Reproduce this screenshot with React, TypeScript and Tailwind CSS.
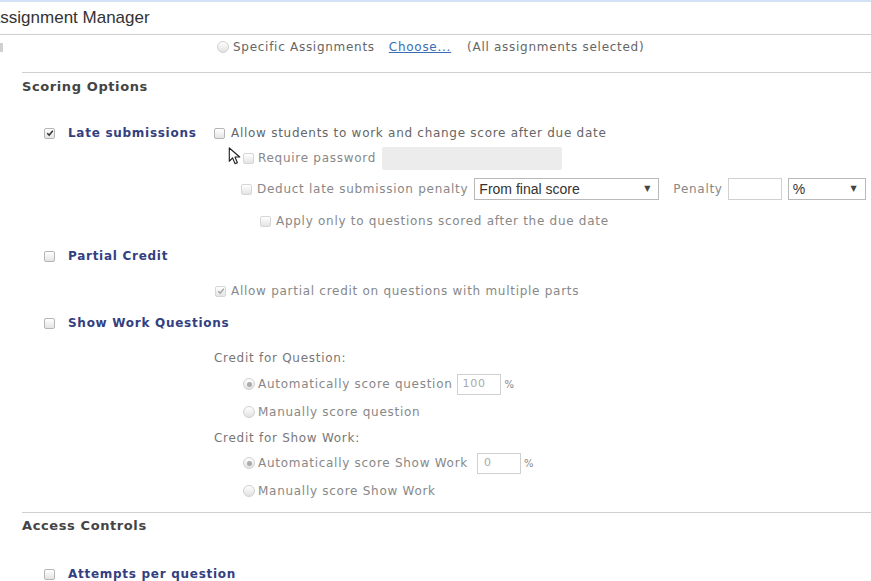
const body = "font-['DejaVu_Sans',Verdana,sans-serif] text-[12px] tracking-[0.72px] text-[#666]";

function Box({ checked = false, dim = false }: { checked?: boolean; dim?: boolean }) {
  return (
    <span
      className={
        "relative inline-flex items-center justify-center w-[11px] h-[11px] rounded-[2px] border shrink-0 bg-gradient-to-b from-white to-[#e4e4e4] " +
        (dim ? "border-[#d6d6d6]" : "border-[#b5b5b5]")
      }
    >
      {checked && (
        <svg viewBox="0 0 10 10" className="w-[8px] h-[8px]">
          <path d="M1.5 5.2 L4 7.6 L8.6 2.2" fill="none" stroke={dim ? "#aaa" : "#333"} strokeWidth="1.8" />
        </svg>
      )}
    </span>
  );
}

function Radio({ on = false }: { on?: boolean }) {
  return (
    <span className="inline-flex items-center justify-center w-[12px] h-[12px] rounded-full border border-[#d0d0d0] bg-gradient-to-b from-white to-[#e2e2e2] shrink-0">
      {on && <span className="w-[5px] h-[5px] rounded-full bg-[#aaa]" />}
    </span>
  );
}

function Label({ children }: { children: React.ReactNode }) {
  return <span className="font-bold text-[#33407f]">{children}</span>;
}

function Select({ text, w }: { text: string; w: string }) {
  return (
    <span className={"flex items-center justify-between h-[22px] border border-[#b9b9b9] pl-[4px] pr-[8px] bg-white tracking-normal " + w}>
      <span className="font-['Liberation_Sans',Arial,sans-serif] text-[14px] text-[#333]">{text}</span>
      <span className="text-[8px] text-[#444]">▼</span>
    </span>
  );
}

export default function App() {
  return (
    <div className={"relative w-[871px] h-[581px] overflow-hidden bg-white " + body}>
      {/* header */}
      <div className="h-[35px] border-t-2 border-t-[#d3e2f6] border-b border-b-[#cfcfcf] flex items-center tracking-normal">
        <span className="ml-[-11px] font-['Liberation_Sans',Arial,sans-serif] text-[17px] text-[#333]">
          Assignment Manager
        </span>
      </div>

      <div className="mt-[1px] flex items-center h-[22px]">
        <span className="w-[3px] h-[9px] bg-[#d0d0d0]" />
        <span className="ml-[214px] flex items-center gap-[4px]">
          <Radio />
          <span>Specific Assignments</span>
        </span>
        <span className="ml-[14px] text-[#3b6db3] underline">Choose...</span>
        <span className="ml-[16px]">(All assignments selected)</span>
      </div>

      {/* scoring options */}
      <div className="mt-[14px] ml-[22px] border-t border-[#d0d0d0] pt-[3px]">
        <div className="h-[22px] flex items-center font-bold text-[#444] text-[13px] tracking-[0.6px]">Scoring Options</div>
      </div>

      <div className="mt-[24px] h-[22px] flex items-center">
        <div className="w-[214px] pl-[44px] flex items-center gap-[13px]">
          <Box checked />
          <Label>Late submissions</Label>
        </div>
        <div className="flex items-center gap-[6px]">
          <Box />
          <span>Allow students to work and change score after due date</span>
        </div>
      </div>

      <div className="mt-[2px] h-[24px] flex items-center pl-[243px] gap-[4px] text-[#888]">
        <Box dim />
        <span>Require password</span>
        <span className="ml-[2px] w-[180px] h-[23px] bg-[#ececec] rounded-[2px]" />
      </div>

      <div className="mt-[8px] h-[22px] flex items-center pl-[241px] text-[#888]">
        <Box dim />
        <span className="ml-[5px]">Deduct late submission penalty</span>
        <Select text="From final score" w="ml-[6px] w-[185px]" />
        <span className="ml-[14px]">Penalty</span>
        <span className="ml-[5px] w-[54px] h-[22px] border border-[#d0d0d0] bg-white" />
        <Select text="%" w="ml-[6px] w-[78px]" />
      </div>

      <div className="mt-[10px] h-[22px] flex items-center pl-[260px] gap-[5px] text-[#888]">
        <Box dim />
        <span>Apply only to questions scored after the due date</span>
      </div>

      <div className="mt-[13px] h-[22px] flex items-center pl-[44px] gap-[13px]">
        <Box />
        <Label>Partial Credit</Label>
      </div>

      <div className="mt-[13px] h-[22px] flex items-center pl-[215px] gap-[5px] text-[#888]">
        <Box checked dim />
        <span>Allow partial credit on questions with multiple parts</span>
      </div>

      <div className="mt-[10px] h-[22px] flex items-center pl-[44px] gap-[13px]">
        <Box />
        <Label>Show Work Questions</Label>
      </div>

      <div className="mt-[13px] h-[22px] flex items-center pl-[214px] text-[#777]">Credit for Question:</div>

      <div className="mt-[4px] h-[22px] flex items-center pl-[243px] text-[#888]">
        <Radio on />
        <span className="ml-[3px]">Automatically score question</span>
        <span className="ml-[4px] w-[44px] h-[21px] border border-[#d0d0d0] pl-[5px] flex items-center text-[11px] text-[#aaa]">100</span>
        <span className="ml-[4px] text-[10px]">%</span>
      </div>

      <div className="mt-[6px] h-[22px] flex items-center pl-[243px] text-[#888]">
        <Radio />
        <span className="ml-[3px]">Manually score question</span>
      </div>

      <div className="mt-[4px] h-[22px] flex items-center pl-[214px] text-[#777]">Credit for Show Work:</div>

      <div className="mt-[3px] h-[22px] flex items-center pl-[243px] text-[#888]">
        <Radio on />
        <span className="ml-[3px]">Automatically score Show Work</span>
        <span className="ml-[9px] w-[44px] h-[21px] border border-[#d0d0d0] pl-[6px] flex items-center text-[11px] text-[#aaa]">0</span>
        <span className="ml-[3px] text-[10px]">%</span>
      </div>

      <div className="mt-[6px] h-[22px] flex items-center pl-[243px] text-[#888]">
        <Radio />
        <span className="ml-[3px]">Manually score Show Work</span>
      </div>

      {/* access controls */}
      <div className="mt-[10px] ml-[22px] border-t border-[#d0d0d0] pt-[2px]">
        <div className="h-[22px] flex items-center font-bold text-[#444] text-[13px] tracking-[0.6px]">Access Controls</div>
      </div>

      <div className="mt-[26px] h-[22px] flex items-center pl-[44px] gap-[13px]">
        <Box />
        <Label>Attempts per question</Label>
      </div>

      {/* mouse cursor */}
      <svg viewBox="0 0 14 20" className="absolute left-[228px] top-[147px] w-[14px] h-[19px]">
        <path d="M1 1 L1 15 L4.5 11.5 L7 17.5 L9.5 16.5 L7 10.5 L12 10.5 Z" fill="white" stroke="#222" strokeWidth="1.2" strokeLinejoin="round" />
      </svg>
    </div>
  );
}
